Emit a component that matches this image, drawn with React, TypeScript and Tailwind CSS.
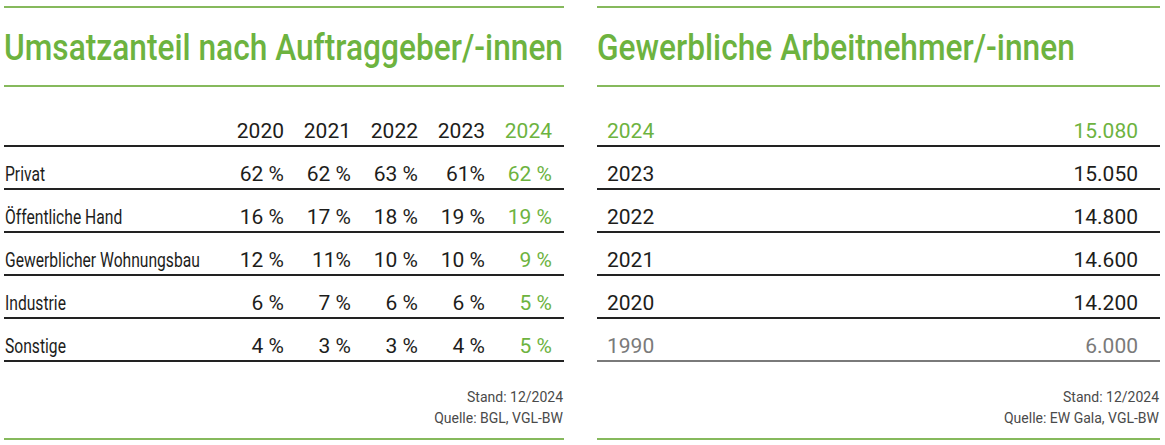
const green = 'text-[#6db33f]'

const shares = [
  { label: 'Privat', values: ['62 %', '62 %', '63 %', '61%', '62 %'] },
  { label: 'Öffentliche Hand', values: ['16 %', '17 %', '18 %', '19 %', '19 %'] },
  { label: 'Gewerblicher Wohnungsbau', values: ['12 %', '11%', '10 %', '10 %', '9 %'] },
  { label: 'Industrie', values: ['6 %', '7 %', '6 %', '6 %', '5 %'] },
  { label: 'Sonstige', values: ['4 %', '3 %', '3 %', '4 %', '5 %'] },
]

const years = ['2020', '2021', '2022', '2023', '2024']

const workers = [
  { year: '2024', value: '15.080', tone: 'green' },
  { year: '2023', value: '15.050', tone: 'dark' },
  { year: '2022', value: '14.800', tone: 'dark' },
  { year: '2021', value: '14.600', tone: 'dark' },
  { year: '2020', value: '14.200', tone: 'dark' },
  { year: '1990', value: '6.000', tone: 'grey' },
]

function GreenRule() {
  return <div className="h-[2px] bg-[#86b95c]" />
}

// the reference face is a narrow DIN-style grotesque, so Roboto is squeezed a little
function Narrow({ children, className = '' }: { children: React.ReactNode; className?: string }) {
  return <span className={`inline-block origin-left whitespace-nowrap ${className}`}>{children}</span>
}

function Heading({ children }: { children: React.ReactNode }) {
  return (
    <div className="h-[77px] pt-[22px]">
      <h2 className={`text-[36px] leading-[36px] font-medium ${green}`}>
        <Narrow className="scale-x-[0.88]">{children}</Narrow>
      </h2>
    </div>
  )
}

function Footer({ source }: { source: string }) {
  return (
    <div className="mt-[25px] mb-[9px] pr-[1px] text-right text-[14px] leading-[21px] text-[#4a4a4a]">
      <p>Stand: 12/2024</p>
      <p>Quelle: {source}</p>
    </div>
  )
}

function ShareTable() {
  return (
    <div className="w-[560px] flex flex-col">
      <GreenRule />
      <Heading>Umsatzanteil nach Auftraggeber/-innen</Heading>
      <GreenRule />
      <div className="h-[60px] flex items-end pb-[3px] pr-[12px] border-b-2 border-[#222]">
        <div className="flex-1" />
        {years.map((y, i) => (
          <div key={y} className={`w-[67px] shrink-0 text-right ${i === 4 ? green : ''}`}>{y}</div>
        ))}
      </div>
      {shares.map((row) => (
        <div key={row.label} className="h-[43px] flex items-end pb-[3px] pr-[12px] border-b-2 border-[#222]">
          <div className="flex-1 min-w-0 pl-[1px]">
            <Narrow className="scale-x-[0.745]">{row.label}</Narrow>
          </div>
          {row.values.map((v, i) => (
            <div key={i} className={`w-[67px] shrink-0 text-right ${i === 4 ? green : ''}`}>{v}</div>
          ))}
        </div>
      ))}
      <Footer source="BGL, VGL-BW" />
      <GreenRule />
    </div>
  )
}

function WorkerTable() {
  return (
    <div className="w-[563px] flex flex-col">
      <GreenRule />
      <Heading>Gewerbliche Arbeitnehmer/-innen</Heading>
      <GreenRule />
      {workers.map((row, i) => {
        const tone = row.tone === 'green' ? green : row.tone === 'grey' ? 'text-[#7a7a7a]' : ''
        const border = row.tone === 'grey' ? 'border-[#7a7a7a]' : 'border-[#222]'
        return (
          <div
            key={row.year}
            className={`${i === 0 ? 'h-[60px]' : 'h-[43px]'} flex items-end justify-between pb-[3px] pl-[10px] pr-[22px] border-b-2 ${border} ${tone}`}
          >
            <span>{row.year}</span>
            <span>{row.value}</span>
          </div>
        )
      })}
      <Footer source="EW Gala, VGL-BW" />
      <GreenRule />
    </div>
  )
}

export default function App() {
  return (
    <div className="w-[1165px] h-[445px] bg-white pt-[6px] pl-[4px] flex gap-[33px] text-[21px] leading-[21px] text-[#1d1d1b] font-['Roboto','Liberation_Sans',sans-serif]">
      <ShareTable />
      <WorkerTable />
    </div>
  )
}
